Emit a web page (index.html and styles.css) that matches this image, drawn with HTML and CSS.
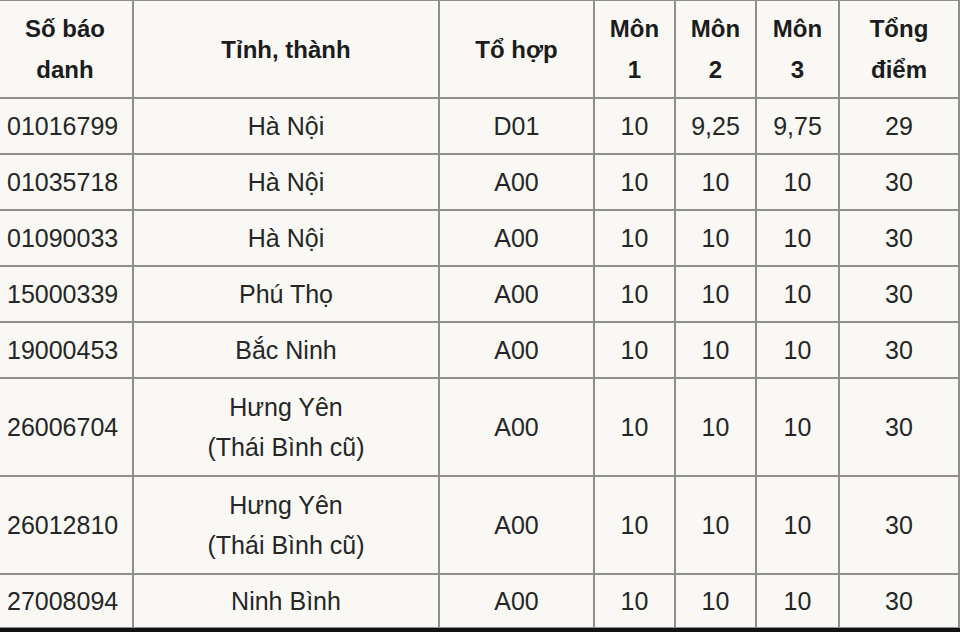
FILE: index.html
```html
<!DOCTYPE html>
<html lang="vi">
<head>
<meta charset="utf-8">
<title>Bảng điểm</title>
<link rel="stylesheet" href="styles.css">
</head>
<body>
<div class="page">
  <table class="scores">
    <colgroup>
      <col class="c-sbd"><col class="c-tinh"><col class="c-tohop"><col class="c-mon"><col class="c-mon"><col class="c-mon3"><col class="c-tong">
    </colgroup>
    <thead>
      <tr class="head">
        <th>Số báo<br>danh</th>
        <th>Tỉnh, thành</th>
        <th>Tổ hợp</th>
        <th>Môn<br>1</th>
        <th>Môn<br>2</th>
        <th>Môn<br>3</th>
        <th>Tổng<br>điểm</th>
      </tr>
    </thead>
    <tbody>
      <tr class="r1"><td class="sbd">01016799</td><td>Hà Nội</td><td>D01</td><td>10</td><td>9,25</td><td>9,75</td><td>29</td></tr>
      <tr class="r1"><td class="sbd">01035718</td><td>Hà Nội</td><td>A00</td><td>10</td><td>10</td><td>10</td><td>30</td></tr>
      <tr class="r1"><td class="sbd">01090033</td><td>Hà Nội</td><td>A00</td><td>10</td><td>10</td><td>10</td><td>30</td></tr>
      <tr class="r1"><td class="sbd">15000339</td><td>Phú Thọ</td><td>A00</td><td>10</td><td>10</td><td>10</td><td>30</td></tr>
      <tr class="r1"><td class="sbd">19000453</td><td>Bắc Ninh</td><td>A00</td><td>10</td><td>10</td><td>10</td><td>30</td></tr>
      <tr class="r2"><td class="sbd">26006704</td><td>Hưng Yên<br>(Thái Bình cũ)</td><td>A00</td><td>10</td><td>10</td><td>10</td><td>30</td></tr>
      <tr class="r2"><td class="sbd">26012810</td><td>Hưng Yên<br>(Thái Bình cũ)</td><td>A00</td><td>10</td><td>10</td><td>10</td><td>30</td></tr>
      <tr class="r1 last"><td class="sbd">27008094</td><td>Ninh Bình</td><td>A00</td><td>10</td><td>10</td><td>10</td><td>30</td></tr>
    </tbody>
  </table>
  <div class="strip"></div>
</div>
</body>
</html>
```
FILE: styles.css
```css
html, body {
  margin: 0;
  padding: 0;
  background: #f9f8f4;
}
.page {
  width: 960px;
  height: 632px;
  overflow: hidden;
  position: relative;
  background: #f9f8f4;
  font-family: "Liberation Sans", Arial, sans-serif;
  color: #262626;
}
.scores {
  border-collapse: collapse;
  table-layout: fixed;
  width: 962px;
  margin-left: -4px;
  margin-top: -1px;
}
.c-sbd { width: 136px; }
.c-tinh { width: 306px; }
.c-tohop { width: 155px; }
.c-mon { width: 81px; }
.c-mon3 { width: 83px; }
.c-tong { width: 120px; }
.scores th, .scores td {
  border: 2px solid #8e8e8c;
  text-align: center;
  vertical-align: middle;
  padding: 0;
  font-size: 25px;
  line-height: 40px;
}
.scores th {
  font-weight: bold;
  color: #1c1c1c;
  font-size: 24px;
  line-height: 41px;
}
.head th { height: 96px; }
.r1 td { height: 54px; }
.r2 td { height: 96px; }
.last td { height: 52px; }
.scores td.sbd {
  text-align: left;
  padding-left: 9px;
}
.strip {
  position: absolute;
  left: 0;
  right: 0;
  bottom: 0;
  height: 4px;
  background: #111;
}
```
